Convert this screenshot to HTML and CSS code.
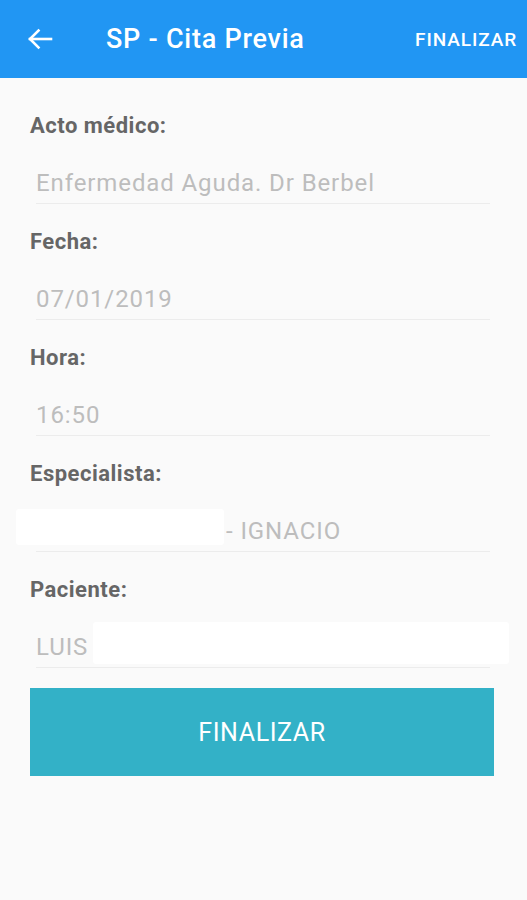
FILE: index.html
```html
<!DOCTYPE html>
<html lang="es">
<head>
<meta charset="utf-8">
<title>SP - Cita Previa</title>
<link rel="stylesheet" href="styles.css">
</head>
<body>
<header class="appbar">
  <button class="back" aria-label="Volver">
    <svg width="26" height="22" viewBox="0 0 26 22" fill="none" stroke="#fff" stroke-width="2.6" stroke-linecap="square">
      <path d="M3 11H24"/>
      <path d="M11.5 2.5L3 11l8.5 8.5"/>
    </svg>
  </button>
  <h1 class="title">SP - Cita Previa</h1>
  <span class="action">FINALIZAR</span>
</header>
<main class="form">
  <div class="field">
    <div class="label">Acto médico:</div>
    <div class="value">Enfermedad Aguda. Dr Berbel</div>
  </div>
  <div class="field">
    <div class="label">Fecha:</div>
    <div class="value">07/01/2019</div>
  </div>
  <div class="field">
    <div class="label">Hora:</div>
    <div class="value">16:50</div>
  </div>
  <div class="field">
    <div class="label">Especialista:</div>
    <div class="value"><span class="spacer"></span>- IGNACIO<span class="redact redact-spec"></span></div>
  </div>
  <div class="field">
    <div class="label">Paciente:</div>
    <div class="value">LUIS<span class="redact redact-pac"></span></div>
  </div>
  <button class="submit">FINALIZAR</button>
</main>
</body>
</html>
```
FILE: styles.css
```css
* { box-sizing: border-box; }
html, body {
  margin: 0;
  padding: 0;
  background: #fafafa;
  font-family: Roboto, "Noto Sans", "Liberation Sans", sans-serif;
}
.appbar {
  height: 78px;
  background: #2196f3;
  display: flex;
  align-items: center;
  color: #fff;
  padding: 0 10px 0 27px;
}
.back {
  background: none;
  border: 0;
  padding: 0;
  width: 26px;
  height: 22px;
  display: flex;
}
.title {
  margin: 0 0 0 53px;
  font-size: 27px;
  font-weight: 500;
  flex: 1;
  letter-spacing: 0.75px;
}
.action {
  font-size: 19px;
  font-weight: 500;
  letter-spacing: 0.9px;
}
.form {
  padding: 36px 33px 40px 30px;
  display: flex;
  flex-direction: column;
}
.field {
  margin-bottom: 26px;
}
.label {
  font-size: 22px;
  line-height: 24px;
  font-weight: 700;
  color: #666;
  letter-spacing: 0.5px;
}
.value {
  position: relative;
  margin: 30px 4px 0 6px;
  font-size: 24px;
  line-height: 30px;
  color: #bdbdbd;
  letter-spacing: 0.9px;
  padding-bottom: 5px;
  border-bottom: 1px solid #ececec;
}
.spacer {
  display: inline-block;
  width: 190px;
}
.redact {
  position: absolute;
  background: #fff;
  border-radius: 3px;
}
.redact-spec {
  left: -20px;
  top: -7px;
  width: 208px;
  height: 36px;
}
.redact-pac {
  left: 57px;
  top: -10px;
  width: 416px;
  height: 42px;
}
.submit {
  margin-top: -6px;
  height: 88px;
  border: 0;
  background: #33b1c7;
  color: #fff;
  font-family: inherit;
  font-size: 25px;
  letter-spacing: 0.6px;
  width: 464px;
}
```
